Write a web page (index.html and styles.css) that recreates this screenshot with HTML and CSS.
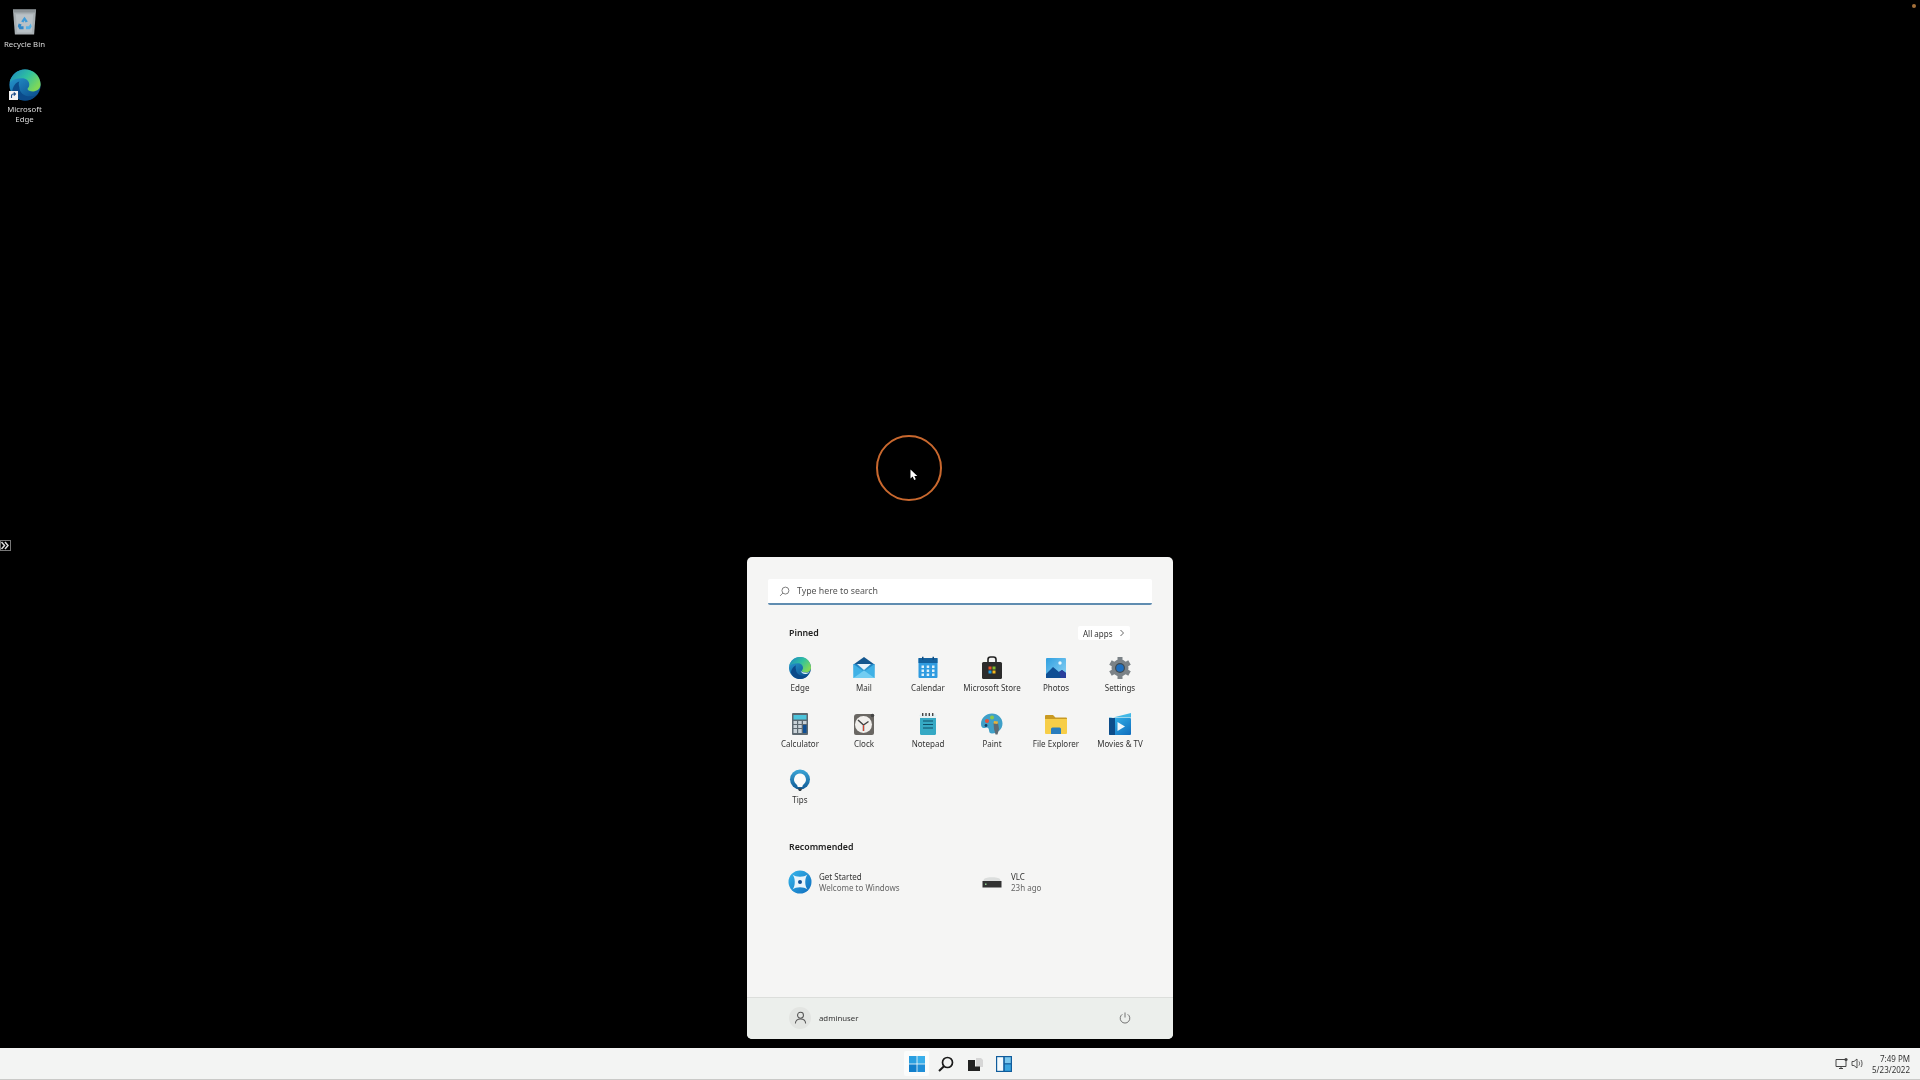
FILE: index.html
```html
<!DOCTYPE html>
<html>
<head>
    <title>Desktop - Start menu</title>
    <link rel="stylesheet" href="styles.css">
</head>
<body>
    <svg class="defs" aria-hidden="true">
        <defs>
            <linearGradient id="edgeBlue" x1="0" y1="0" x2="0.7" y2="1"><stop offset="0" stop-color="#2aa3d8"/><stop offset="1" stop-color="#0c4f8f"/></linearGradient>
            <linearGradient id="edgeGreen" x1="0" y1="0" x2="1" y2="0.6"><stop offset="0" stop-color="#1b84c4"/><stop offset="0.55" stop-color="#2fc0a0"/><stop offset="1" stop-color="#7fd858"/></linearGradient>
            <linearGradient id="skyBlue" x1="0" y1="0" x2="0" y2="1"><stop offset="0" stop-color="#1f7fc0"/><stop offset="1" stop-color="#4cc0ea"/></linearGradient>
            <linearGradient id="tileBlue" x1="0" y1="0" x2="1" y2="1"><stop offset="0" stop-color="#36b8ec"/><stop offset="1" stop-color="#0f6cbd"/></linearGradient>
            <linearGradient id="photoSky" x1="0" y1="0" x2="1" y2="1"><stop offset="0" stop-color="#2f9fe0"/><stop offset="1" stop-color="#8fd4f5"/></linearGradient>
            <linearGradient id="tipRing" x1="0" y1="0" x2="0" y2="1"><stop offset="0" stop-color="#3aa6d8"/><stop offset="1" stop-color="#125b96"/></linearGradient>

            <symbol id="edge" viewBox="0 0 24 24">
                <circle cx="12" cy="12" r="11" fill="url(#edgeBlue)"/>
                <path d="M1.2 10C2.4 4.8 6.800 1 12 1c6.200 0 11 4.800 11 10.500 0 3.200-2.500 5-5.200 5-2.300 0-4-.8-4-1.700 0-.6 1.200-1 1.200-3C15 9 12.800 7.200 9.800 7.200 6 7.200 3 8.200 1.200 10z" fill="url(#edgeGreen)"/>
                <path d="M8 13.500c0 3.500 3 6.500 7.500 6.500 1.500 0 3-.3 4.500-1-2 2.600-5 4-8 4-4 0-7.500-2.500-9-6 0-3.500 2.500-7 5-7.500-.6 1-.5 2.500 0 4z" fill="#0b4a8a"/>
            </symbol>
        </defs>
    </svg>

    <div class="desktop">
        <div class="shortcuts">
            <div class="shortcut">
                <svg class="bin-icon" viewBox="0 0 26 28">
                    <path d="M1 1h24l-2 26H3z" fill="#a9b0b4"/>
                    <path d="M1 1h24l-.3 3H1.300z" fill="#8c9397"/>
                    <path d="M4 6h18l-1.400 19H5.400z" fill="#b9c1c6"/>
                    <path d="M13 8.500l3.500 5-2.400 1-1.100-2-1.100 2-2.400-1z" fill="#3f9bd8"/>
                    <path d="M7 15.500l3 1-.8 1.800H12v3.200H7.800L6 18.500z" fill="#2f86c8"/>
                    <path d="M19.500 15.500l1 3.200-1.800 2.800H14.500v-3.200h3z" fill="#56b0e4"/>
                </svg>
                <span class="shortcut-label">Recycle Bin</span>
            </div>
            <div class="shortcut shortcut-edge">
                <span class="edge-wrap">
                    <svg class="edge-icon" viewBox="0 0 24 24"><use href="#edge"/></svg>
                    <svg class="shortcut-arrow" viewBox="0 0 9 9"><rect width="9" height="9" fill="#f4f4f4"/><path d="M2.500 7V5C2.500 3.800 3.300 3 4.500 3H6M4.800 1.500L6.500 3 4.800 4.500" fill="none" stroke="#1f4f8a" stroke-width="1.100"/></svg>
                </span>
                <span class="shortcut-label">Microsoft<br>Edge</span>
            </div>
        </div>

        <svg class="side-tab" viewBox="0 0 11 11">
            <rect x="0.500" y="0.500" width="10" height="10" fill="none" stroke="#777"/>
            <path d="M1.500 2l3 3.500-3 3.500M5 2l3 3.500-3 3.500" fill="none" stroke="#ddd" stroke-width="1.500"/>
        </svg>
        <div class="corner-dot"></div>

        <div class="click-ring"></div>
        <svg class="cursor" viewBox="0 0 8 12"><path d="M.5.500v9l2.200-2 1.500 3.500 1.600-.7-1.500-3.300h3z" fill="#fff"/></svg>

        <div class="start-menu">
            <div class="search-box">
                <svg class="search-glass" viewBox="0 0 12 12"><circle cx="7" cy="5" r="3.800" fill="none" stroke="#666" stroke-width="0.900"/><path d="M4.200 7.700L1.200 10.800" stroke="#666" stroke-width="0.900"/></svg>
                <span>Type here to search</span>
            </div>

            <div class="section-head">
                <span class="section-title">Pinned</span>
                <span class="all-apps">All apps <svg class="chevron" viewBox="0 0 6 8"><path d="M1.500 1l3 3-3 3" fill="none" stroke="#555" stroke-width="0.900"/></svg></span>
            </div>

            <div class="pinned-grid">
                <div class="app">
                    <svg class="app-icon menu-edge" viewBox="0 0 24 24"><use href="#edge"/><path d="M12.500 14.500c1 1.500 3 2.200 5.500 2.200 1.500 0 3-.5 4-1.500-.5 1-2 2.500-4.500 2.800-2.500.2-4.500-1.500-5-3.500z" fill="#dff3f7"/></svg>
                    <span class="app-name">Edge</span>
                </div>
                <div class="app">
                    <svg class="app-icon" viewBox="0 0 24 24">
                        <path d="M12 1l10.500 7.500H1.500z" fill="#14578f"/>
                        <path d="M1.500 8h21v14h-21z" fill="url(#skyBlue)"/>
                        <path d="M5 8h14l-7 6z" fill="#e8f4fb"/>
                        <path d="M1.500 8L12 16 22.500 8v14h-21z" fill="#3fb1e6"/>
                        <path d="M1.500 22L12 14.500 22.500 22z" fill="#72cdf2"/>
                    </svg>
                    <span class="app-name">Mail</span>
                </div>
                <div class="app">
                    <svg class="app-icon" viewBox="0 0 24 24">
                        <rect x="2.500" y="2" width="19" height="20" rx="1" fill="#2f9be0"/>
                        <rect x="2.500" y="2" width="19" height="5" fill="#14629f"/>
                        <path d="M6 .800h1.500v3H6zM16.500.800H18v3h-1.500z" fill="#0f4f85"/>
                        <path d="M5.500 9.500h2.500V12H5.500zM10.700 9.500h2.500V12h-2.500zM16 9.500h2.500V12H16zM5.500 13.500h2.500V16H5.500zM10.700 13.500h2.500V16h-2.500zM16 13.500h2.500V16H16zM5.500 17.500h2.500V20H5.500zM10.700 17.500h2.500V20h-2.500zM16 17.500h2.500V20H16z" fill="#dff1fb"/>
                    </svg>
                    <span class="app-name">Calendar</span>
                </div>
                <div class="app">
                    <svg class="app-icon" viewBox="0 0 24 24">
                        <path d="M8 7V3.500C8 2 9 1 10.500 1h3C15 1 16 2 16 3.500V7" fill="none" stroke="#222" stroke-width="1.600"/>
                        <rect x="2" y="6" width="20" height="17" rx="1.500" fill="#2b2b2b"/>
                        <path d="M8.500 10.500h3v3h-3z" fill="#e8502a"/>
                        <path d="M12.500 10.500h3v3h-3z" fill="#7fba2a"/>
                        <path d="M8.500 14.500h3v3h-3z" fill="#1f9be0"/>
                        <path d="M12.500 14.500h3v3h-3z" fill="#f5b81c"/>
                    </svg>
                    <span class="app-name">Microsoft Store</span>
                </div>
                <div class="app">
                    <svg class="app-icon" viewBox="0 0 24 24">
                        <rect x="2" y="2" width="20" height="20" rx="1" fill="url(#photoSky)"/>
                        <circle cx="16" cy="7" r="1.700" fill="#eef8fd"/>
                        <path d="M2 18l7-7 6 5 3-2 4 3v5H2z" fill="#0f4f94"/>
                        <path d="M15 16l3-2 4 3v5h-5z" fill="#2a3f9c"/>
                    </svg>
                    <span class="app-name">Photos</span>
                </div>
                <div class="app">
                    <svg class="app-icon" viewBox="0 0 24 24">
                        <circle cx="12" cy="12" r="8.500" fill="#7b8287"/>
                        <path d="M9.500 1h5v5h-5zM9.500 18h5v5h-5z" fill="#7b8287"/>
                        <path d="M9.500 1h5v5h-5zM9.500 18h5v5h-5z" fill="#7b8287" transform="rotate(60 12 12)"/>
                        <path d="M9.500 1h5v5h-5zM9.500 18h5v5h-5z" fill="#7b8287" transform="rotate(120 12 12)"/>
                        <circle cx="12" cy="12" r="5" fill="#3e4a52"/>
                        <circle cx="12" cy="12" r="3.800" fill="#1f6fbf"/>
                    </svg>
                    <span class="app-name">Settings</span>
                </div>

                <div class="app">
                    <svg class="app-icon" viewBox="0 0 24 24">
                        <rect x="4" y="1" width="16" height="22" rx="1" fill="#5c6870"/>
                        <rect x="5.500" y="3" width="13" height="4.500" fill="#4cc4dc"/>
                        <path d="M5.500 9h3.500v3H5.500zM10.200 9h3.500v3h-3.500zM5.500 13h3.500v3H5.500zM10.200 13h3.500v3h-3.500zM5.500 17h3.500v4H5.500zM10.200 17h3.500v4h-3.500z" fill="#c9d2d8"/>
                        <path d="M15 9h3.500v3H15z" fill="#c9d2d8"/>
                        <path d="M15 13h3.500v8H15z" fill="#0f4f94"/>
                    </svg>
                    <span class="app-name">Calculator</span>
                </div>
                <div class="app">
                    <svg class="app-icon" viewBox="0 0 24 24">
                        <path d="M5 2h14a3 3 0 013 3v16a2 2 0 01-2 2H4a2 2 0 01-2-2V5a3 3 0 013-3z" fill="#6a6763"/>
                        <circle cx="11.500" cy="12.500" r="8.500" fill="#f1efec"/>
                        <path d="M11.500 13V19M11.500 13L6 8M11.500 13L16.500 9.500" fill="none" stroke="#444" stroke-width="1.500"/>
                        <path d="M11.500 13V19" stroke="#d8402f" stroke-width="1"/>
                        <circle cx="20.500" cy="3.500" r="1.800" fill="#444"/>
                    </svg>
                    <span class="app-name">Clock</span>
                </div>
                <div class="app">
                    <svg class="app-icon" viewBox="0 0 24 24">
                        <rect x="4" y="2" width="16" height="21" rx="1.500" fill="#36a9c4"/>
                        <rect x="4" y="2" width="16" height="4" fill="#e6f1f4"/>
                        <path d="M6 1h1.400v3H6zM9.300 1h1.400v3H9.300zM12.600 1H14v3h-1.400zM16 1h1.400v3H16z" fill="#444"/>
                        <path d="M7 9h10M7 12.500h10M7 16h10" stroke="#0f4f68" stroke-width="1"/>
                    </svg>
                    <span class="app-name">Notepad</span>
                </div>
                <div class="app">
                    <svg class="app-icon" viewBox="0 0 24 24">
                        <path d="M12 1.500C6 1.500 1 6 1 12c0 3 1.500 4.500 3.500 4 2-.4 3-1 4 .5 1 1.800 0 5 3.500 5 6 0 10.500-4.500 10.500-10S18 1.500 12 1.500z" fill="#3fa0c8"/>
                        <circle cx="7" cy="9" r="2" fill="#e5503a"/>
                        <circle cx="12" cy="5.500" r="2" fill="#8cc84b"/>
                        <circle cx="6" cy="13.500" r="1.400" fill="#123f6a"/>
                        <path d="M13.500 11h4.500l1 6-1.500 5.500h-2L14 17z" fill="#5f6a72"/>
                        <path d="M14 9l4 .5-.5 2.500-4-.5z" fill="#e8b23a"/>
                    </svg>
                    <span class="app-name">Paint</span>
                </div>
                <div class="app">
                    <svg class="app-icon" viewBox="0 0 24 24">
                        <path d="M1 4a1 1 0 011-1h7l2.500 2.500H22a1 1 0 011 1V8H1z" fill="#c99a22"/>
                        <path d="M1 7h22v14a1 1 0 01-1 1H2a1 1 0 01-1-1z" fill="#f7ce48"/>
                        <path d="M7 22v-5a1.500 1.500 0 011.500-1.500h7A1.500 1.500 0 0117 17v5z" fill="#2a7dbd"/>
                    </svg>
                    <span class="app-name">File Explorer</span>
                </div>
                <div class="app">
                    <svg class="app-icon" viewBox="0 0 24 24">
                        <path d="M1 6.500L23 1v4.500H1z" fill="#42b8e6"/>
                        <rect x="1" y="6" width="22" height="17" rx="1" fill="url(#tileBlue)"/>
                        <path d="M1 6h6v17H2a1 1 0 01-1-1z" fill="#0d4d8a"/>
                        <path d="M9.500 10v9l7.500-4.500z" fill="#f0f8fc"/>
                    </svg>
                    <span class="app-name">Movies &amp; TV</span>
                </div>

                <div class="app">
                    <svg class="app-icon" viewBox="0 0 24 24">
                        <circle cx="12" cy="11.500" r="10" fill="url(#tipRing)"/>
                        <path d="M12 5.500a6 6 0 014.200 10.200c-1 1-1.700 1.500-1.900 3.300h-4.600c-.2-1.800-.9-2.300-1.900-3.300A6 6 0 0112 5.500z" fill="#fbfbfa"/>
                        <path d="M9.800 20.500h4.400L13 23h-2z" fill="#33414a"/>
                    </svg>
                    <span class="app-name">Tips</span>
                </div>
            </div>

            <div class="section-title recommended-title">Recommended</div>
            <div class="recommended">
                <div class="rec-item">
                    <svg class="app-icon" viewBox="0 0 24 24">
                        <circle cx="12" cy="12" r="11.500" fill="url(#tileBlue)"/>
                        <path d="M4.500 4.500C8 7.500 16 7.500 19.500 4.500 16.500 8 16.500 16 19.500 19.500 16 16.500 8 16.500 4.500 19.500 7.500 16 7.500 8 4.500 4.500z" fill="#e8f4fb"/>
                        <circle cx="12" cy="12" r="2" fill="#0f4f94"/>
                    </svg>
                    <div class="rec-text">
                        <span class="rec-name">Get Started</span>
                        <span class="rec-sub">Welcome to Windows</span>
                    </div>
                </div>
                <div class="rec-item">
                    <svg class="app-icon" viewBox="0 0 24 24">
                        <path d="M4 9c2-2.500 14-2.500 16 0l1 3H3z" fill="#dcdedd"/>
                        <rect x="2.500" y="11" width="19" height="6.500" fill="#333"/>
                        <rect x="5" y="13.500" width="1.500" height="1.500" fill="#8fd08f"/>
                    </svg>
                    <div class="rec-text">
                        <span class="rec-name">VLC</span>
                        <span class="rec-sub">23h ago</span>
                    </div>
                </div>
            </div>

            <div class="menu-footer">
                <div class="user">
                    <span class="avatar">
                        <svg class="avatar-icon" viewBox="0 0 14 14"><circle cx="7" cy="4.500" r="3.200" fill="none" stroke="#555" stroke-width="1.100"/><path d="M1.500 13.500c0-3 2.200-5 5.500-5s5.500 2 5.500 5" fill="none" stroke="#555" stroke-width="1.100"/></svg>
                    </span>
                    <span class="user-name">adminuser</span>
                </div>
                <svg class="power" viewBox="0 0 12 12"><path d="M3.300 2.300a4.800 4.800 0 105.400 0M6 .5v5" fill="none" stroke="#666" stroke-width="0.900"/></svg>
            </div>
        </div>
    </div>

    <div class="taskbar">
        <div class="task-spacer"></div>
        <div class="task-icons">
            <span class="task-btn task-btn-active">
                <svg class="task-icon" viewBox="0 0 16 16">
                    <path d="M0 0h7.600v7.600H0z" fill="#2a9fe0"/><path d="M8.400 0H16v7.600H8.400z" fill="#38aeea"/>
                    <path d="M0 8.400h7.600V16H0z" fill="#127fcb"/><path d="M8.400 8.400H16V16H8.400z" fill="#1f8fd8"/>
                </svg>
            </span>
            <span class="task-btn">
                <svg class="task-icon" viewBox="0 0 16 16"><circle cx="9.500" cy="6.500" r="5" fill="none" stroke="#1a1a1a" stroke-width="1.700"/><path d="M6 10.200L1 15" stroke="#1a1a1a" stroke-width="2"/></svg>
            </span>
            <span class="task-btn">
                <svg class="task-icon" viewBox="0 0 16 16"><path d="M4 2h10l2 2v7H9V2z" fill="#d6d6d6"/><path d="M1 4h7v6.500h5V15H1z" fill="#222"/></svg>
            </span>
            <span class="task-btn">
                <svg class="task-icon" viewBox="0 0 16 16"><rect width="16" height="16" fill="#0f5c9c"/><rect x="1.200" y="1.200" width="6" height="13.600" fill="#f4fafd"/><rect x="8.800" y="1.200" width="6" height="6" fill="#7cc8ee"/><rect x="8.800" y="8.400" width="6" height="6.400" fill="#3aa5df"/></svg>
            </span>
        </div>
        <div class="tray">
            <svg class="tray-icon" viewBox="0 0 13 13"><path d="M1 2.500h10v7H1zM4 11.500h4M6 9.500v2" fill="none" stroke="#444"/><circle cx="11" cy="2.500" r="1.600" fill="#444"/></svg>
            <svg class="tray-icon" viewBox="0 0 13 13"><path d="M1 4.500h2L6 2v9L3 8.500H1z" fill="none" stroke="#444" stroke-width="0.900"/><path d="M8 4.500c.8 1.200.8 2.800 0 4M10 3c1.400 2 1.400 5 0 7" fill="none" stroke="#444" stroke-width="0.900"/></svg>
            <div class="clock">
                <span>7:49 PM</span>
                <span>5/23/2022</span>
            </div>
        </div>
    </div>
</body>
</html>
```

FILE: styles.css
```css
html, body {
    margin: 0;
    height: 100%;
}

body {
    display: flex;
    flex-direction: column;
    background-color: #000;
    font-family: "Noto Sans", "Open Sans", sans-serif;
    overflow: hidden;
}

.defs {
    position: absolute;
    width: 0;
    height: 0;
}

/* the capture is a soft video frame */
.desktop, .taskbar {
    filter: blur(0.4px);
}

.desktop {
    position: relative;
    flex: 1;
}

.shortcuts {
    display: flex;
    flex-direction: column;
    width: 49px;
    gap: 18px;
    padding-top: 8px;
}

.shortcut {
    display: flex;
    flex-direction: column;
    align-items: center;
    color: #dcdcdc;
    font-size: 7.800px;
    line-height: 10.500px;
    text-align: center;
}

.bin-icon {
    width: 25px;
    height: 28px;
    margin-bottom: 3px;
}

.edge-wrap {
    position: relative;
    display: block;
    width: 34px;
    height: 34px;
    margin-bottom: 2px;
    color: #000;
}

.edge-icon {
    width: 34px;
    height: 34px;
}

.shortcut-arrow {
    position: absolute;
    left: 1px;
    bottom: 2px;
    width: 9px;
    height: 9px;
}

.side-tab {
    position: absolute;
    left: 0;
    top: 540px;
    width: 11px;
    height: 11px;
}

.corner-dot {
    position: absolute;
    top: 4px;
    right: 4px;
    width: 4px;
    height: 4px;
    border-radius: 50%;
    background-color: #a5713a;
}

.click-ring {
    position: absolute;
    left: 876px;
    top: 435px;
    width: 62px;
    height: 62px;
    border: 2.500px solid #c9682e;
    border-radius: 50%;
}

.cursor {
    position: absolute;
    left: 910px;
    top: 469px;
    width: 8px;
    height: 12px;
}

.start-menu {
    position: absolute;
    left: 747px;
    top: 557px;
    width: 426px;
    height: 482px;
    display: flex;
    flex-direction: column;
    background-color: #f5f5f4;
    border-radius: 5px;
    overflow: hidden;
    color: #222;
}

.search-box {
    display: flex;
    align-items: center;
    gap: 7px;
    height: 24px;
    margin: 22px 21px 0;
    padding-left: 11px;
    background-color: #fff;
    border-bottom: 2px solid #5f8cb0;
    border-radius: 2px;
    color: #555;
    font-size: 8.800px;
}

.search-glass {
    width: 11px;
    height: 11px;
}

.section-head {
    display: flex;
    justify-content: space-between;
    align-items: center;
    height: 14px;
    margin: 21px 43px 0 42px;
}

.section-title {
    font-size: 8.800px;
    font-weight: 600;
    color: #222;
}

.all-apps {
    display: flex;
    align-items: center;
    justify-content: space-between;
    width: 52px;
    height: 14px;
    padding: 0 5px;
    box-sizing: border-box;
    background-color: #fff;
    border-radius: 2px;
    font-size: 8px;
    color: #333;
}

.chevron {
    width: 6px;
    height: 8px;
}

.pinned-grid {
    display: grid;
    grid-template-columns: repeat(6, 64px);
    grid-auto-rows: 56px;
    height: 168px;
    margin: 16px 0 0 21px;
}

.app {
    display: flex;
    flex-direction: column;
    align-items: center;
}

.app-icon {
    width: 24px;
    height: 24px;
    flex-shrink: 0;
}

.app-name {
    margin-top: 2px;
    font-size: 8px;
    line-height: 12px;
    white-space: nowrap;
    color: #333;
}

.recommended-title {
    margin: 17px 0 0 42px;
}

.recommended {
    display: grid;
    grid-template-columns: 192px 192px;
    margin: 17px 0 0 41px;
}

.rec-item {
    display: flex;
    align-items: center;
    gap: 7px;
}

.rec-text {
    display: flex;
    flex-direction: column;
    font-size: 8px;
    line-height: 11px;
}

.rec-name {
    color: #333;
}

.rec-sub {
    color: #666;
}

.menu-footer {
    display: flex;
    justify-content: space-between;
    align-items: center;
    margin-top: auto;
    height: 42px;
    padding: 0 42px 2px 42px;
    box-sizing: border-box;
    background-color: #ecefec;
    border-top: 1px solid #dcdedb;
}

.user {
    display: flex;
    align-items: center;
    gap: 8px;
}

.avatar {
    display: flex;
    align-items: center;
    justify-content: center;
    width: 22px;
    height: 22px;
    border-radius: 50%;
    background-color: #e3e5e2;
}

.avatar-icon {
    width: 13px;
    height: 13px;
}

.user-name {
    font-size: 7.800px;
    color: #333;
}

.power {
    width: 12px;
    height: 12px;
}

.taskbar {
    display: grid;
    grid-template-columns: 1fr auto 1fr;
    align-items: center;
    height: 31px;
    background-color: #f3f4f3;
    border-bottom: 1px solid #c9c9c7;
}

.task-icons {
    display: flex;
    align-items: center;
    gap: 4px;
}

.task-btn {
    display: flex;
    align-items: center;
    justify-content: center;
    width: 25px;
    height: 25px;
}

.task-btn-active {
    background-color: #fbfcfb;
    border-radius: 2px;
}

.task-icon {
    width: 16px;
    height: 16px;
}

.tray {
    display: flex;
    align-items: center;
    justify-content: flex-end;
    gap: 3px;
    padding-right: 10px;
}

.tray-icon {
    width: 13px;
    height: 13px;
}

.clock {
    display: flex;
    flex-direction: column;
    align-items: flex-end;
    margin-left: 5px;
    font-size: 8px;
    line-height: 11px;
    color: #333;
}
```
